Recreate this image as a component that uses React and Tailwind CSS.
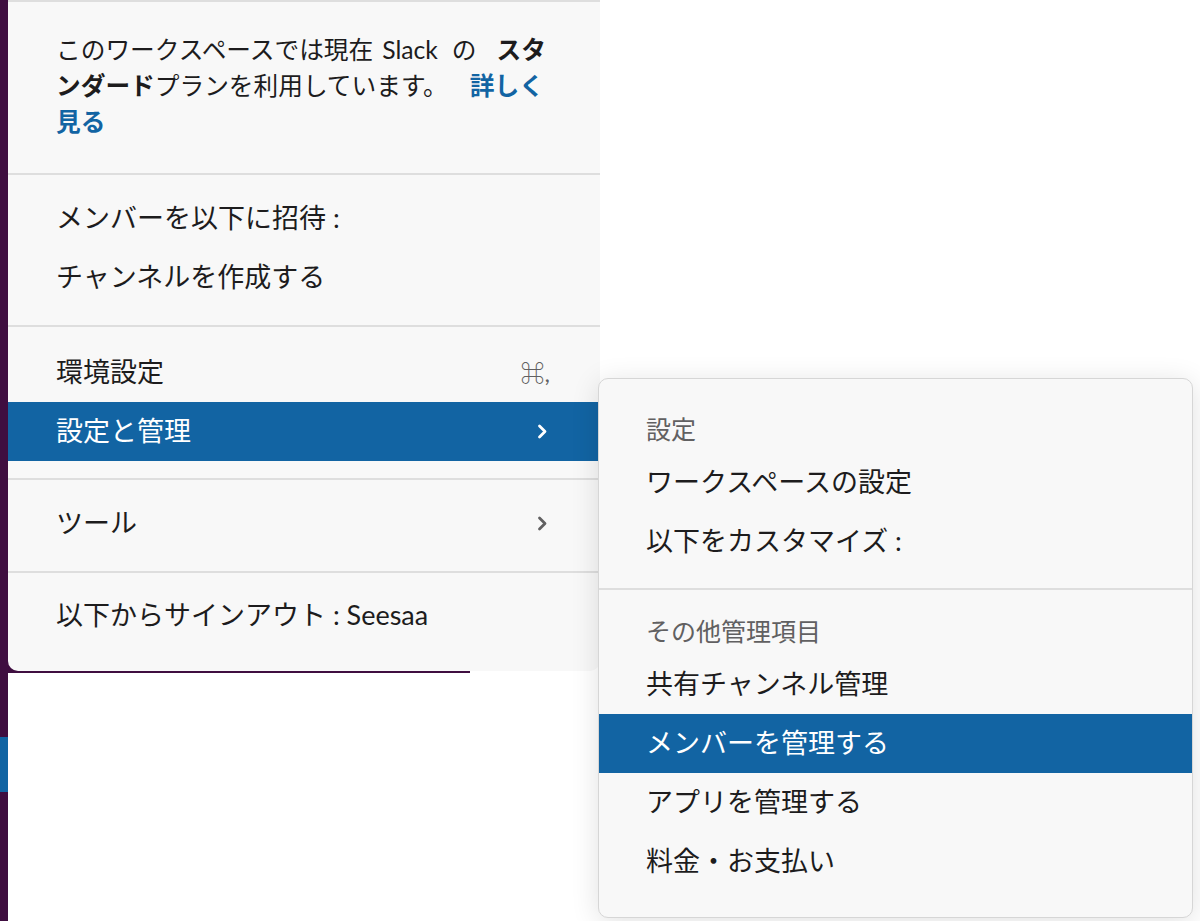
import React from 'react'

const FONT = { fontFamily: 'Lato, "Noto Sans CJK JP", "Noto Sans", sans-serif' }

const Chevron = ({ className }) => (
  <svg width="11" height="15" viewBox="0 0 11 15" className={className} fill="none">
    <path d="M2.5 2l5.5 5.5-5.5 5.5" stroke="currentColor" strokeWidth="2.8" strokeLinecap="round" strokeLinejoin="round" />
  </svg>
)

const Divider = () => <div className="h-[2px] bg-[#dedede]" />

function Row({ label, active, right, inset = 'pl-[48px]' }) {
  return (
    <div
      className={`flex h-[59px] items-center justify-between ${inset} pr-[50px] text-[27px] ${
        active ? 'bg-[#1264a3] text-white' : 'text-[#1d1c1d]'
      }`}
    >
      <span>{label}</span>
      {right}
    </div>
  )
}

function MainMenu() {
  return (
    <div className="absolute left-[8px] top-0 w-[592px] rounded-b-[10px] border-t-2 border-[#dedede] bg-[#f8f8f8]">
      <div className="pl-[48px] pr-[40px] pt-[30px] pb-[33px] text-[24.7px] leading-[36px] text-[#1d1c1d] whitespace-nowrap">
        <div>
          このワークスペースでは現在<span className="ml-[9px]">Slack</span>
          <span className="ml-[14px]">の</span>
          <b className="ml-[20px] font-bold">スタ</b>
        </div>
        <div>
          <b className="font-bold">ンダード</b>プランを利用しています。
          <b className="ml-[22px] font-bold text-[#1264a3]">詳しく</b>
        </div>
        <div>
          <b className="font-bold text-[#1264a3]">見る</b>
        </div>
      </div>
      <Divider />
      <div className="pt-[14px] pb-[18px]">
        <Row label="メンバーを以下に招待 :" />
        <Row label="チャンネルを作成する" />
      </div>
      <Divider />
      <div className="pt-[16px] pb-[17px]">
        <Row label="環境設定" right={<span className="text-[24px] text-[#616061]">⌘,</span>} />
        <Row label="設定と管理" active right={<Chevron className="mr-[2px] text-white" />} />
      </div>
      <Divider />
      <div className="pt-[14px] pb-[18px]">
        <Row label="ツール" right={<Chevron className="mr-[2px] text-[#616061]" />} />
      </div>
      <Divider />
      <div className="pt-[13px] pb-[26px]">
        <Row label="以下からサインアウト : Seesaa" />
      </div>
    </div>
  )
}

function Header({ children }) {
  return (
    <div className="flex h-[46px] items-center pl-[47px] text-[25px] text-[#616061]">{children}</div>
  )
}

function SubMenu() {
  return (
    <div className="absolute left-[598px] top-[378px] w-[595px] overflow-hidden rounded-[10px] border border-[#d6d6d6] bg-[#f8f8f8] shadow-[0_4px_28px_rgba(0,0,0,0.12)]">
      <div className="pt-[28px] pb-[17px]">
        <Header>設定</Header>
        <Row label="ワークスペースの設定" inset="pl-[47px]" />
        <Row label="以下をカスタマイズ :" inset="pl-[47px]" />
      </div>
      <Divider />
      <div className="pt-[19px] pb-[26px]">
        <Header>その他管理項目</Header>
        <Row label="共有チャンネル管理" inset="pl-[47px]" />
        <Row label="メンバーを管理する" inset="pl-[47px]" active />
        <Row label="アプリを管理する" inset="pl-[47px]" />
        <Row label="料金・お支払い" inset="pl-[47px]" />
      </div>
    </div>
  )
}

export default function App() {
  return (
    <div className="relative h-[921px] w-[1200px] overflow-hidden bg-white" style={FONT}>
      {/* sidebar behind the menu */}
      <div className="flex h-full">
        <div className="flex w-[8px] flex-col bg-[#3f0e40]">
          <div className="h-[737px]" />
          <div className="h-[55px] bg-[#1164a3]" />
        </div>
        <div className="h-[673px] w-[462px] bg-[#3f0e40]" />
      </div>
      <MainMenu />
      <SubMenu />
    </div>
  )
}
